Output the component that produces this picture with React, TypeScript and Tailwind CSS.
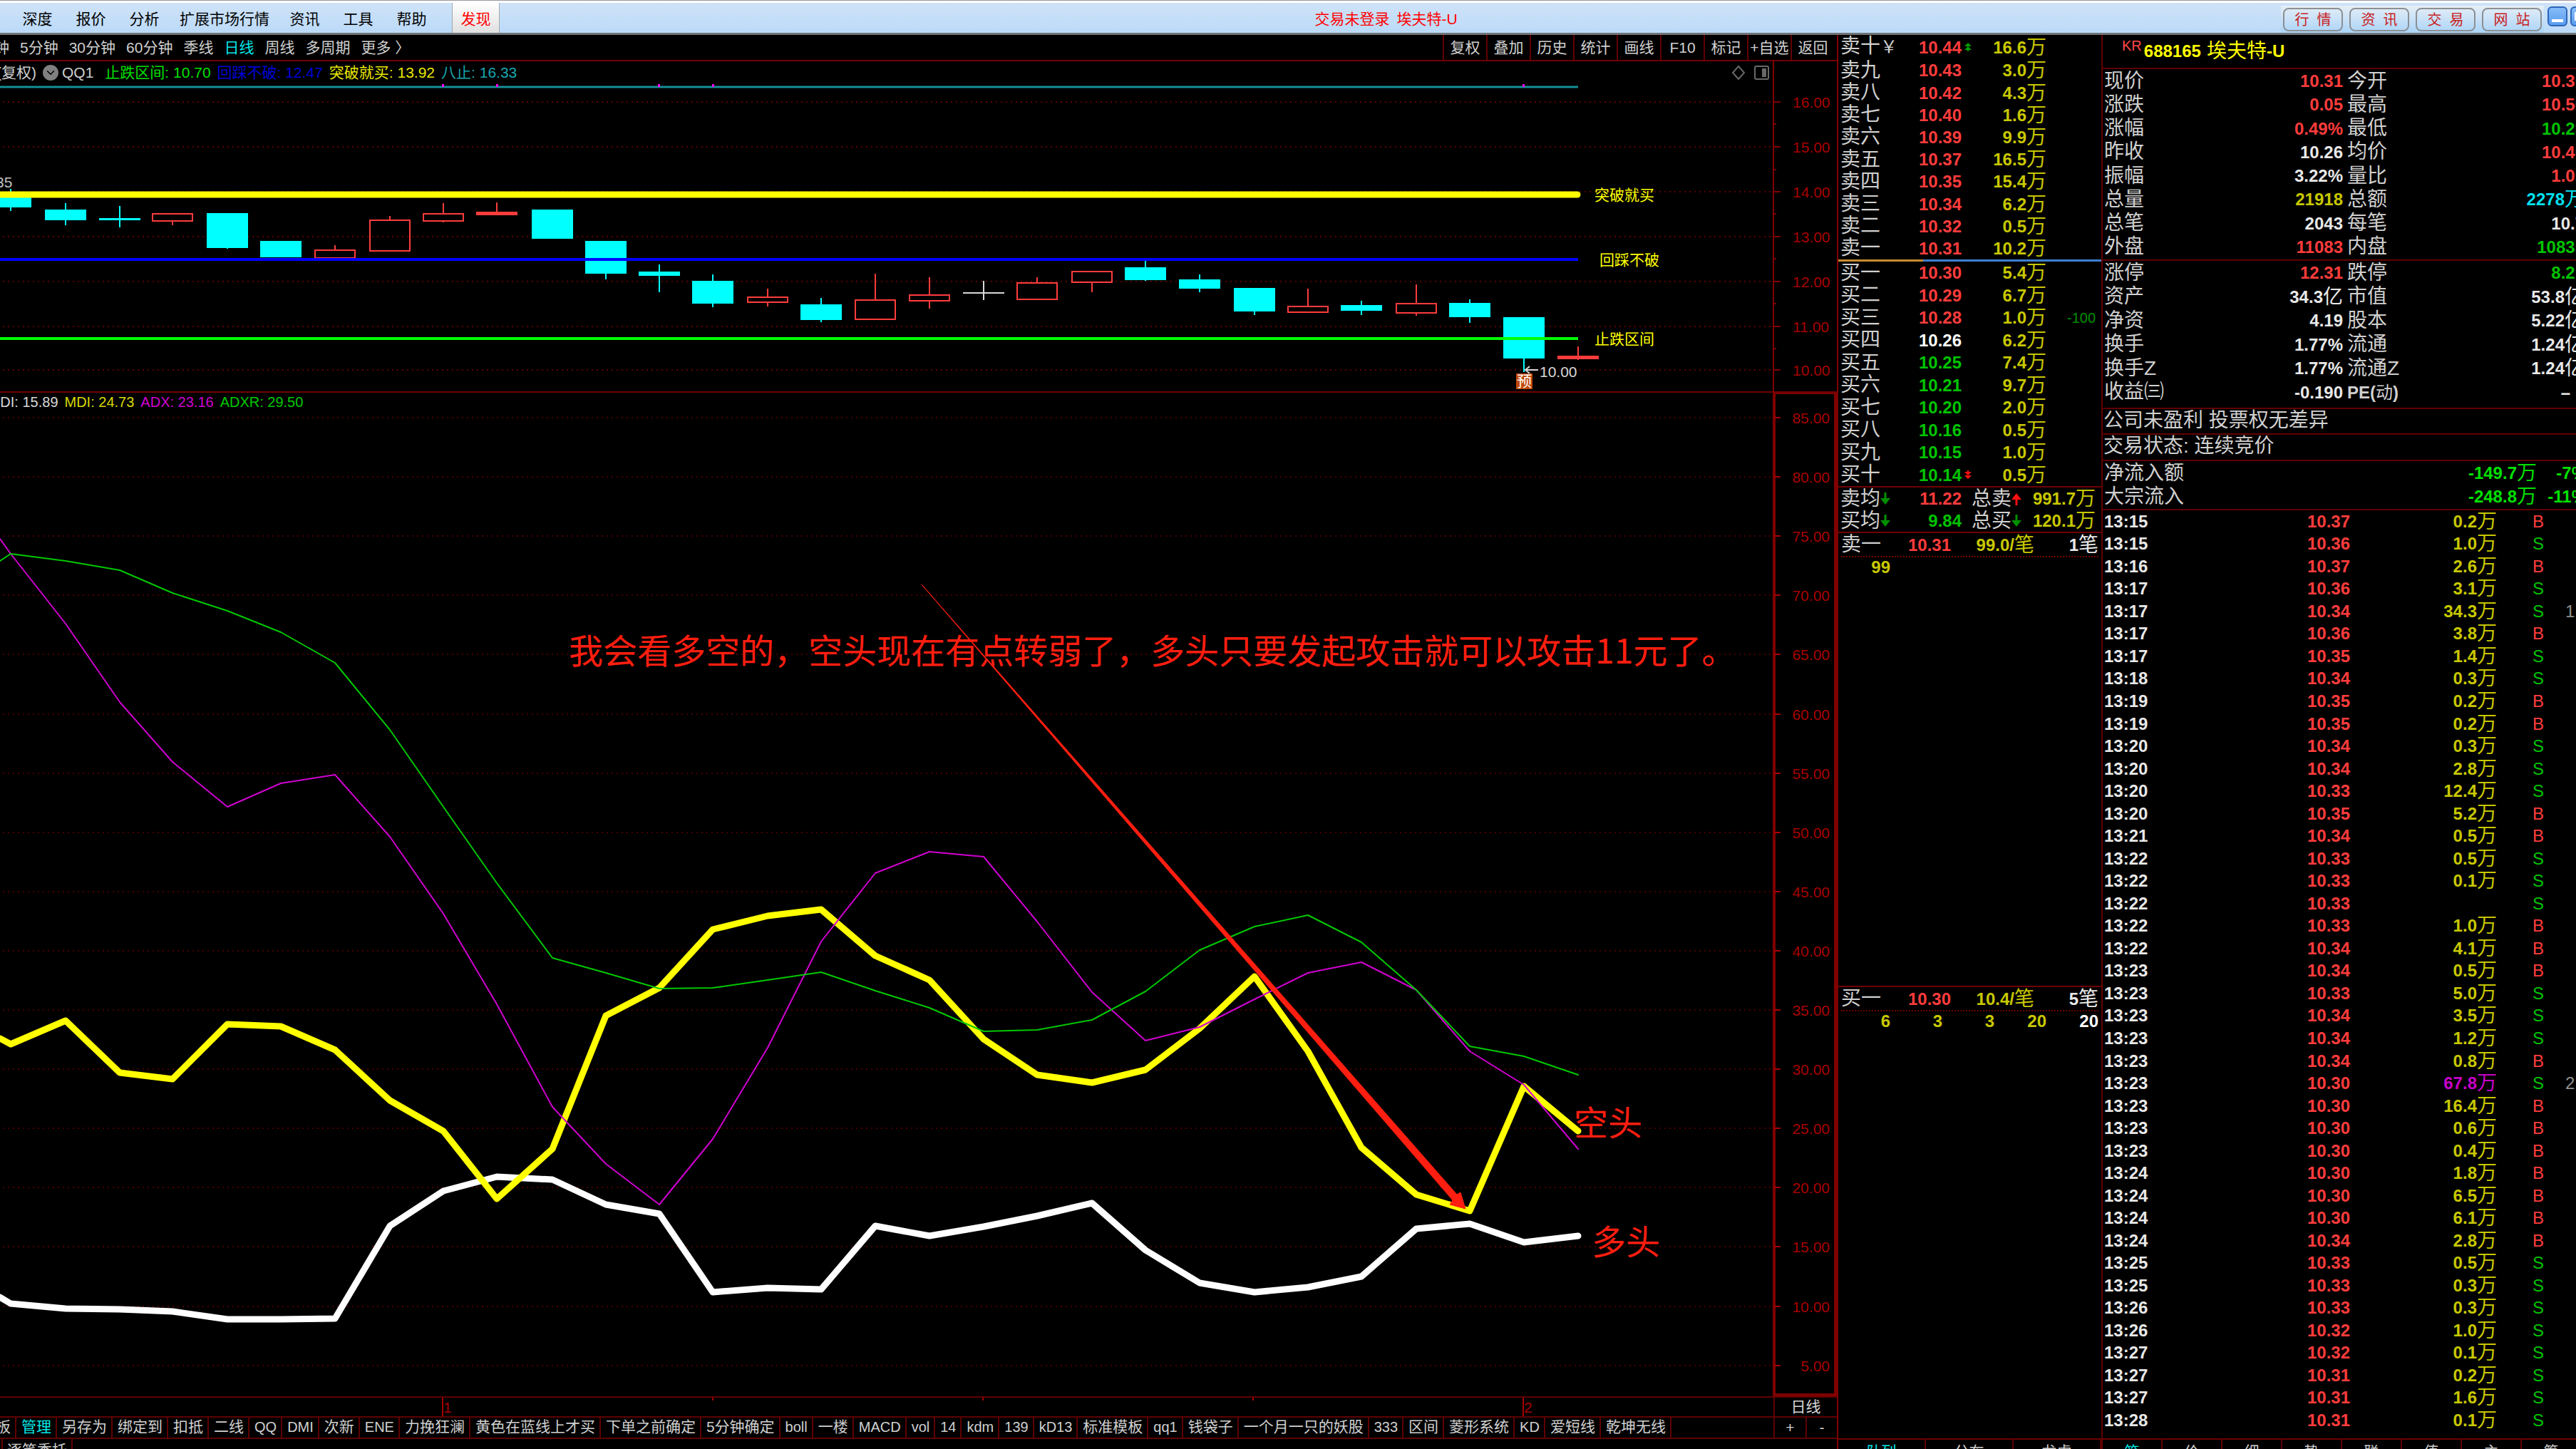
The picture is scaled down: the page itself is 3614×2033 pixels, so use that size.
import React from "react";
import { ChevronDown } from "lucide-react";

const CJK = "'Liberation Sans','Noto Sans CJK SC',sans-serif";

/* ---------- data ---------- */

const menus = ["深度", "报价", "分析", "扩展市场行情", "资讯", "工具", "帮助"];
const periods = ["钟", "5分钟", "30分钟", "60分钟", "季线", "日线", "周线", "多周期", "更多 〉"];
const tools = ["复权", "叠加", "历史", "统计", "画线", "F10", "标记", "+自选", "返回"];
const links = ["行情", "资讯", "交易", "网站"];

const X = [
  15, 92, 168, 242, 319, 394, 470, 547, 622, 697, 775, 850, 925, 1000, 1077, 1152, 1228, 1304, 1380, 1455, 1532, 1607,
  1683, 1760, 1835, 1910, 1987, 2062, 2138, 2214,
];

type Kind = "c" | "r" | "w";
// kind, body top, body bottom, wick top, wick bottom
const candles: [Kind, number, number, number, number][] = [
  ["c", 270, 291, 265, 296],
  ["c", 294, 309, 285, 316],
  ["c", 306, 309, 289, 319],
  ["r", 300, 310, 300, 316],
  ["c", 299, 348, 299, 349],
  ["c", 338, 361, 338, 361],
  ["r", 351, 362, 344, 362],
  ["r", 309, 352, 303, 352],
  ["r", 300, 310, 285, 312],
  ["r", 298, 301, 284, 301],
  ["c", 294, 335, 294, 335],
  ["c", 338, 384, 338, 392],
  ["c", 381, 387, 371, 410],
  ["c", 394, 426, 385, 431],
  ["r", 417, 424, 405, 430],
  ["c", 427, 449, 418, 452],
  ["r", 421, 448, 384, 448],
  ["r", 414, 422, 389, 433],
  ["w", 410, 412, 394, 421],
  ["r", 397, 420, 389, 420],
  ["r", 381, 396, 381, 410],
  ["c", 375, 393, 366, 394],
  ["c", 392, 405, 385, 410],
  ["c", 404, 437, 404, 442],
  ["r", 430, 438, 405, 438],
  ["c", 428, 436, 422, 442],
  ["r", 426, 439, 399, 443],
  ["c", 425, 445, 420, 453],
  ["c", 445, 503, 445, 522],
  ["r", 500, 503, 486, 505],
];

const adxr = [
  777, 787, 800, 832, 857, 887, 930, 1024, 1132, 1239, 1344, 1365, 1387, 1386, 1375, 1364, 1390, 1414, 1447, 1445, 1431,
  1391, 1333, 1300, 1284, 1322, 1389, 1468, 1482, 1508,
];
const adx = [
  777, 875, 985, 1069, 1132, 1099, 1087, 1174, 1282, 1409, 1553, 1633, 1690, 1598, 1470, 1321, 1225, 1195, 1202, 1293,
  1392, 1460, 1441, 1402, 1365, 1350, 1389, 1475, 1522, 1612,
];
const mdi = [
  1465, 1432, 1505, 1514, 1437, 1440, 1473, 1544, 1587, 1682, 1612, 1425, 1386, 1304, 1285, 1276, 1341, 1375, 1458,
  1508, 1519, 1501, 1443, 1370, 1475, 1610, 1676, 1699, 1524, 1587,
];
const pdi = [
  1829, 1836, 1837, 1840, 1851, 1851, 1850, 1720, 1671, 1651, 1655, 1690, 1703, 1813, 1807, 1809, 1720, 1734, 1721,
  1706, 1688, 1754, 1800, 1813, 1806, 1791, 1724, 1717, 1743, 1734,
];
const line = (first: number, ys: number[]) => `0,${first} ` + ys.map((y, i) => `${X[i]},${y}`).join(" ");

const priceGrid: [number, string][] = [
  [143, "16.00"], [206, "15.00"], [269, "14.00"], [332, "13.00"], [395, "12.00"], [458, "11.00"], [519, "10.00"],
];
const dmiGrid: [number, string][] = Array.from({ length: 17 }, (_, i) => [
  Math.round(586 + i * 83.1),
  (85 - i * 5).toFixed(2),
]);

const templates = [
  "板", "管理", "另存为", "绑定到", "扣抵", "二线", "QQ", "DMI", "次新", "ENE", "力挽狂澜", "黄色在蓝线上才买",
  "下单之前确定", "5分钟确定", "boll", "一楼", "MACD", "vol", "14", "kdm", "139", "kD13", "标准模板", "qq1",
  "钱袋子", "一个月一只的妖股", "333", "区间", "菱形系统", "KD", "爱短线", "乾坤无线",
];

const R = "text-[#ff3c3c]";
const G = "text-[#00c400]";
const Y = "text-[#c8c800]";
const W = "text-[#e8e8e8]";

type Level = [string, string, string, string, string?];
const asks: Level[] = [
  ["卖十", "10.44", R, "16.6万"],
  ["卖九", "10.43", R, "3.0万"],
  ["卖八", "10.42", R, "4.3万"],
  ["卖七", "10.40", R, "1.6万"],
  ["卖六", "10.39", R, "9.9万"],
  ["卖五", "10.37", R, "16.5万"],
  ["卖四", "10.35", R, "15.4万"],
  ["卖三", "10.34", R, "6.2万"],
  ["卖二", "10.32", R, "0.5万"],
  ["卖一", "10.31", R, "10.2万"],
];
const bids: Level[] = [
  ["买一", "10.30", R, "5.4万"],
  ["买二", "10.29", R, "6.7万"],
  ["买三", "10.28", R, "1.0万", "-100"],
  ["买四", "10.26", "text-white", "6.2万"],
  ["买五", "10.25", G, "7.4万"],
  ["买六", "10.21", G, "9.7万"],
  ["买七", "10.20", G, "2.0万"],
  ["买八", "10.16", G, "0.5万"],
  ["买九", "10.15", G, "1.0万"],
  ["买十", "10.14", G, "0.5万"],
];

type Pair = [string, string, string, string, string, string];
const quote: Pair[] = [
  ["现价", "10.31", R, "今开", "10.30", R],
  ["涨跌", "0.05", R, "最高", "10.56", R],
  ["涨幅", "0.49%", R, "最低", "10.23", G],
  ["昨收", "10.26", W, "均价", "10.40", R],
  ["振幅", "3.22%", W, "量比", "1.05", R],
  ["总量", "21918", Y, "总额", "2278万", "text-[#00e0f0]"],
  ["总笔", "2043", W, "每笔", "10.7", W],
  ["外盘", "11083", R, "内盘", "10835", G],
];
const basics: Pair[] = [
  ["涨停", "12.31", R, "跌停", "8.21", G],
  ["资产", "34.3亿", W, "市值", "53.8亿", W],
  ["净资", "4.19", W, "股本", "5.22亿", W],
  ["换手", "1.77%", W, "流通", "1.24亿", W],
  ["换手Z", "1.77%", W, "流通Z", "1.24亿", W],
  ["收益㈢", "-0.190", W, "PE(动)", "–\u00a0\u00a0\u00a0", W],
];

const ticks: [string, string, string, "B" | "S", string?][] = [
  ["13:15", "10.37", "0.2万", "B"],
  ["13:15", "10.36", "1.0万", "S"],
  ["13:16", "10.37", "2.6万", "B"],
  ["13:17", "10.36", "3.1万", "S"],
  ["13:17", "10.34", "34.3万", "S", "1"],
  ["13:17", "10.36", "3.8万", "B"],
  ["13:17", "10.35", "1.4万", "S"],
  ["13:18", "10.34", "0.3万", "S"],
  ["13:19", "10.35", "0.2万", "B"],
  ["13:19", "10.35", "0.2万", "B"],
  ["13:20", "10.34", "0.3万", "S"],
  ["13:20", "10.34", "2.8万", "S"],
  ["13:20", "10.33", "12.4万", "S"],
  ["13:20", "10.35", "5.2万", "B"],
  ["13:21", "10.34", "0.5万", "B"],
  ["13:22", "10.33", "0.5万", "S"],
  ["13:22", "10.33", "0.1万", "S"],
  ["13:22", "10.33", "", "S"],
  ["13:22", "10.33", "1.0万", "B"],
  ["13:22", "10.34", "4.1万", "B"],
  ["13:23", "10.34", "0.5万", "B"],
  ["13:23", "10.33", "5.0万", "S"],
  ["13:23", "10.34", "3.5万", "S"],
  ["13:23", "10.34", "1.2万", "S"],
  ["13:23", "10.34", "0.8万", "B"],
  ["13:23", "10.30", "67.8万", "S", "2"],
  ["13:23", "10.30", "16.4万", "B"],
  ["13:23", "10.30", "0.6万", "B"],
  ["13:23", "10.30", "0.4万", "B"],
  ["13:24", "10.30", "1.8万", "B"],
  ["13:24", "10.30", "6.5万", "B"],
  ["13:24", "10.30", "6.1万", "B"],
  ["13:24", "10.34", "2.8万", "B"],
  ["13:25", "10.33", "0.5万", "S"],
  ["13:25", "10.33", "0.3万", "S"],
  ["13:26", "10.33", "0.3万", "S"],
  ["13:26", "10.32", "1.0万", "S"],
  ["13:27", "10.32", "0.1万", "S"],
  ["13:27", "10.31", "0.2万", "S"],
  ["13:27", "10.31", "1.6万", "S"],
  ["13:28", "10.31", "0.1万", "S"],
];

/* ---------- small parts ---------- */

/** Bold figure with an optional larger, lighter unit such as 万 or 亿. */
function Num({ v }: { v: string }) {
  const m = v.match(/^(.*?)([万亿笔]?)$/)!;
  return (
    <span className="inline-flex items-center whitespace-nowrap text-2xl leading-7 font-bold">
      {m[1]}
      {m[2] && <span className="text-[28px] leading-7 font-normal">{m[2]}</span>}
    </span>
  );
}

function Arrow({ up, className }: { up?: boolean; className: string }) {
  return (
    <svg viewBox="0 0 14 18" className={"h-[18px] w-3.5 shrink-0 " + className} aria-hidden>
      <g transform={up ? "rotate(180 7 9)" : undefined} fill="currentColor">
        <rect x="5.5" y="0" width="3" height="11" />
        <path d="M0 8h14L7 17z" />
      </g>
    </svg>
  );
}

function DoubleArrow({ up, className }: { up?: boolean; className: string }) {
  return (
    <svg viewBox="0 0 10 12" className={"h-3 w-2.5 " + className} aria-hidden>
      <g transform={up ? undefined : "rotate(180 5 6)"} fill="currentColor">
        <path d="M5 0l5 5H0zM5 5l5 5H0zM4 9h2v3H4z" />
      </g>
    </svg>
  );
}

function Book({ rows, edge }: { rows: Level[]; edge: string }) {
  return (
    <table className="h-[315px] w-full table-fixed border-collapse text-[28px] leading-7">
      <colgroup>
        <col className="w-[90px]" />
        <col className="w-[83px]" />
        <col className="w-4" />
        <col className="w-[103px]" />
        <col />
      </colgroup>
      <tbody>
        {rows.map(([label, price, color, vol, diff]) => (
          <tr key={label}>
            <td className="p-0 pl-[3px] whitespace-nowrap">
              {label}
              {label === "卖十" && <span className="text-2xl">￥</span>}
            </td>
            <td className={"p-0 text-right " + color}>
              <Num v={price} />
            </td>
            <td className="p-0 pl-1">
              {label === edge && (
                <DoubleArrow up={edge === "卖十"} className={edge === "卖十" ? "text-[#00a000]" : "text-[#ff1010]"} />
              )}
            </td>
            <td className={"p-0 text-right " + Y}>
              <Num v={vol} />
            </td>
            <td className="p-0 pr-2 text-right text-xl leading-7 text-[#009000]">{diff}</td>
          </tr>
        ))}
      </tbody>
    </table>
  );
}

function PairTable({ rows, className }: { rows: Pair[]; className: string }) {
  return (
    <table className={"w-full table-fixed border-collapse text-[28px] leading-7 " + className}>
      <colgroup>
        <col className="w-[110px]" />
        <col className="w-[227px]" />
        <col className="w-[110px]" />
        <col />
      </colgroup>
      <tbody>
        {rows.map(([a, b, bc, c, d, dc]) => (
          <tr key={a}>
            <th scope="row" className="p-0 pl-[2px] text-left font-normal whitespace-nowrap">{a}</th>
            <td className={"p-0 text-right " + bc}>
              <Num v={b} />
            </td>
            <th scope="row" className="p-0 pl-[6px] text-left font-normal whitespace-nowrap">
              {c === "PE(动)" ? (
                <span className="text-2xl leading-7 font-bold">
                  PE(<span className="font-normal">动</span>)
                </span>
              ) : (
                c
              )}
            </th>
            <td className={"p-0 pr-[3px] text-right " + dc}>
              <Num v={d} />
            </td>
          </tr>
        ))}
      </tbody>
    </table>
  );
}

function Queue({ head, cells }: { head: [string, string, string, string]; cells: string[] }) {
  return (
    <section>
      <div className="mx-1 flex h-[34px] items-center border-b-2 border-dotted border-[#700000] text-[28px] leading-7">
        <span className="w-14">{head[0]}</span>
        <span className={"w-[98px] text-right " + R}>
          <Num v={head[1]} />
        </span>
        <span className={"w-[117px] text-right " + Y}>
          <Num v={head[2]} />
        </span>
        <span className={"flex-1 text-right " + W}>
          <Num v={head[3]} />
        </span>
      </div>
      <div className="grid grid-cols-5 pr-1 text-right">
        {cells.map((c, i) => (
          <span key={i} className={i === 4 ? "text-white" : Y}>
            <Num v={c} />
          </span>
        ))}
      </div>
    </section>
  );
}

/* ---------- charts ---------- */

function PriceChart() {
  return (
    <svg viewBox="0 86 2577 463" className="block h-auto w-full" fontFamily={CJK} fontSize="21">
      <g stroke="#5c0000" strokeWidth="2" strokeDasharray="2 5">
        {priceGrid.map(([y]) => (
          <line key={y} x1="4" x2="2486" y1={y} y2={y} />
        ))}
      </g>
      <g stroke="#800000" strokeWidth="2">
        <line x1="2488" x2="2488" y1="86" y2="549" />
        {priceGrid.map(([y]) => (
          <line key={y} x1="2488" x2="2498" y1={y} y2={y} />
        ))}
        {[174, 238, 300, 363, 426, 489].map((y) => (
          <line key={y} x1="2488" x2="2492" y1={y} y2={y} />
        ))}
      </g>
      <g fill="#a80000">
        {priceGrid.map(([y, t]) => (
          <text key={y} x="2515" y={y + 8}>{t}</text>
        ))}
      </g>
      <line x1="0" x2="2214" y1="122" y2="122" stroke="#149098" strokeWidth="3" />
      <g fill="#ff00ff">
        {[620, 696, 923, 999, 2136].map((x) => (
          <rect key={x} x={x} y="118" width="3" height="4" />
        ))}
      </g>
      {candles.map(([k, t, b, wt, wb], i) => {
        const x = X[i];
        if (k === "r") {
          return (
            <g key={x} stroke="#ff3c3c" strokeWidth="2" fill="none">
              {wt < t && <line x1={x} x2={x} y1={wt} y2={t} />}
              {wb > b && <line x1={x} x2={x} y1={b} y2={wb} />}
              <rect x={x - 28} y={t} width="56" height={b - t} fill={b - t < 5 ? "#ff3c3c" : "none"} />
            </g>
          );
        }
        const c = k === "c" ? "#00ffff" : "#d8d8d8";
        return (
          <g key={x} fill={c}>
            <rect x={x - 1} y={wt} width="2" height={wb - wt} />
            <rect x={x - 29} y={t} width="58" height={b - t} />
          </g>
        );
      })}
      <line x1="0" x2="2213" y1="273" y2="273" stroke="#ffff00" strokeWidth="9" strokeLinecap="round" />
      <line x1="0" x2="2214" y1="364" y2="364" stroke="#0000ff" strokeWidth="4" />
      <line x1="0" x2="2214" y1="475" y2="475" stroke="#00ff00" strokeWidth="4" />
      <g fill="#ffff00">
        <text x="2237" y="281">突破就买</text>
        <text x="2244" y="372">回踩不破</text>
        <text x="2237" y="483">止跌区间</text>
      </g>
      <text x="-6" y="263" fill="#c0c0c0">35</text>
      <path d="M2158 519h-18m6-5l-6 5 6 5" stroke="#d8d8d8" strokeWidth="2" fill="none" />
      <text x="2160" y="529" fill="#d8d8d8">10.00</text>
      <rect x="2127" y="524" width="23" height="22" fill="#c04808" />
      <text x="2128" y="542" fill="#ffffff">预</text>
    </svg>
  );
}

function DmiChart() {
  return (
    <svg viewBox="0 551 2577 1408" className="block h-auto w-full" fontFamily={CJK} fontSize="21">
      <g stroke="#480000" strokeWidth="2" strokeDasharray="2 5">
        {dmiGrid.map(([y]) => (
          <line key={y} x1="4" x2="2486" y1={y} y2={y} />
        ))}
      </g>
      <rect x="2489" y="551" width="86" height="1406" fill="none" stroke="#800000" strokeWidth="4" />
      <g fill="#a80000">
        {dmiGrid.map(([y, t]) => (
          <React.Fragment key={y}>
            <rect x="2489" y={y - 1} width="9" height="2" />
            <text x="2567" y={y + 8} textAnchor="end">{t}</text>
          </React.Fragment>
        ))}
      </g>
      <g fill="none" strokeLinecap="round" strokeLinejoin="round">
        <polyline points={line(1820, pdi)} stroke="#ffffff" strokeWidth="9" />
        <polyline points={line(1457, mdi)} stroke="#ffff00" strokeWidth="9" />
        <polyline points={line(756, adx)} stroke="#d000d0" strokeWidth="2" />
        <polyline points={line(787, adxr)} stroke="#00c800" strokeWidth="2" />
      </g>
      <path d="M1293 820L2044 1676 2049 1673 2056 1696 2034 1690 2038 1684z" fill="#ff1e10" stroke="#ff1e10" />
      <g fill="#ff1e10" fontSize="48" fontFamily="'Noto Sans CJK SC',sans-serif">
        <text x="798" y="931">我会看多空的，空头现在有点转弱了，多头只要发起攻击就可以攻击11元了。</text>
        <text x="2208" y="1593">空头</text>
        <text x="2233" y="1760">多头</text>
      </g>
    </svg>
  );
}

/* ---------- page ---------- */

function TitleBar() {
  return (
    <header className="flex h-[49px] shrink-0 border-t border-b-[3px] border-t-[#97979f] border-b-[#707478] bg-white pt-[3px] text-[21px]">
      <div className="flex flex-1 overflow-hidden bg-linear-to-b from-[#cfe3f8] to-[#bbdaf8]">
        <nav className="flex shrink-0 pl-[15px] text-black">
          {menus.map((m) => (
            <button key={m} type="button" className={"pt-1 " + (m.length > 2 ? "w-[150px]" : "w-[75px]")}>
              {m}
            </button>
          ))}
          <button
            type="button"
            className="ml-[19px] w-[67px] border-x border-[#a0a8b0] bg-linear-to-b from-white to-[#e0e0e0] pt-1 text-[#ff0000]"
          >
            发现
          </button>
        </nav>
        <h1 className="flex flex-1 items-center justify-center gap-[10px] pt-1 pr-3 text-[#ff0000]">
          <span>交易未登录</span>
          <span>埃夫特-U</span>
        </h1>
        <div className="flex w-[414px] shrink-0 overflow-hidden">
          <div className="mt-1 flex shrink-0 items-start gap-[9px] bg-linear-to-b from-[#e6eef6] to-[#aad4f8] px-[3px] pt-[3px]">
            {links.map((l) => (
              <a
                key={l}
                href="#"
                className="flex h-[33px] w-21 items-center justify-center gap-[11px] rounded-lg border-2 border-[#8c9094] text-xl text-[#c82020]"
              >
                <span>{l[0]}</span>
                <span>{l[1]}</span>
              </a>
            ))}
          </div>
          <button
            type="button"
            aria-label="最小化"
            className="mt-[5px] ml-[5px] flex h-7 w-7 shrink-0 items-end justify-center rounded-md border-2 border-[#2c66b8] bg-linear-to-b from-[#86bcf8] to-[#5a9cf0] pb-1"
          >
            <span className="h-1 w-4 bg-white" />
          </button>
          <button
            type="button"
            aria-label="最大化"
            className="mt-[5px] ml-1 flex h-7 w-7 shrink-0 items-center justify-center rounded-md border-2 border-[#2c66b8] bg-linear-to-b from-[#86bcf8] to-[#5a9cf0]"
          >
            <span className="h-3 w-4 border-2 border-white" />
          </button>
        </div>
      </div>
    </header>
  );
}

function ChartColumn() {
  return (
    <main className="flex min-w-0 flex-1 flex-col text-[21px] text-[#d0d0d0]">
      <div className="flex h-[37px] shrink-0 border-b-2 border-[#700000]">
        <div className="-ml-2 flex flex-1 items-center gap-[15px] overflow-hidden whitespace-nowrap">
          {periods.map((p) => (
            <button key={p} type="button" className={p === "日线" ? "text-[#00e8e8]" : ""}>
              {p}
            </button>
          ))}
        </div>
        {tools.map((t) => (
          <button key={t} type="button" className="w-[61px] border-l-2 border-[#600000] whitespace-nowrap">
            {t}
          </button>
        ))}
        <span className="w-1" />
      </div>

      <section className="relative shrink-0 border-b-2 border-[#700000]">
        <PriceChart />
        <div className="absolute inset-x-0 top-0 -ml-[5px] flex h-8 items-center whitespace-nowrap">
          <span>(复权)</span>
          <ChevronDown className="mr-[5px] ml-[9px] h-[22px] w-[22px] rounded-full bg-[#808080] p-0.5 text-black" />
          <span className="mr-4">QQ1</span>
          <span className="mr-[9px] text-[#00e000]">止跌区间: 10.70</span>
          <span className="mr-[9px] text-[#0000d8]">回踩不破: 12.47</span>
          <span className="mr-[9px] text-[#e8e800]">突破就买: 13.92</span>
          <span className="text-[#18a8b0]">八止: 16.33</span>
          <svg viewBox="0 0 54 22" className="mr-[94px] ml-auto h-[22px] w-[54px]" fill="none" stroke="#686868" strokeWidth="2">
            <path d="M10 2l8 9-8 9-8-9z" />
            <rect x="33" y="2" width="19" height="18" rx="2" />
            <rect x="44" y="6" width="4" height="10" fill="#686868" />
          </svg>
        </div>
      </section>

      <section className="relative shrink-0 border-b-2 border-[#600000]">
        <DmiChart />
        <div className="absolute top-0 left-0 -ml-[13px] flex h-[26px] items-center gap-[9px] text-xl whitespace-nowrap">
          <span className="text-[#d8d8d8]">PDI: 15.89</span>
          <span className="text-[#d8d800]">MDI: 24.73</span>
          <span className="text-[#d000d0]">ADX: 23.16</span>
          <span className="text-[#00c800]">ADXR: 29.50</span>
        </div>
      </section>

      <div className="flex h-7 shrink-0 border-b-2 border-[#600000]">
        <svg viewBox="0 1961 2488 26" className="block h-[26px] min-w-0 flex-1" fontFamily={CJK} fontSize="21" fill="#a80000">
          <rect x="620" y="1961" width="2" height="26" />
          <rect x="999" y="1961" width="2" height="4" />
          <rect x="1378" y="1961" width="2" height="4" />
          <rect x="1757" y="1961" width="2" height="4" />
          <rect x="2136" y="1961" width="2" height="26" />
          <text x="622" y="1982">1</text>
          <text x="2138" y="1982">2</text>
        </svg>
        <div className="flex w-[89px] items-center justify-center border-l-2 border-[#600000] text-[#d8d8d8]">日线</div>
      </div>

      <div className="flex h-[30px] shrink-0 border-b-2 border-[#600000] leading-[26px]">
        <div className="-ml-[13px] flex min-w-0 flex-1 overflow-hidden">
          {templates.map((t) => (
            <button
              key={t}
              type="button"
              className={
                "flex shrink-0 border-r-2 border-[#600000] pr-1.5 pl-[7px] whitespace-nowrap " +
                (/^[A-Za-z0-9]+$/.test(t) ? "text-xl leading-[26px] " : "") +
                (t === "管理" ? "text-[#00e8e8]" : "")
              }
            >
              {t}
            </button>
          ))}
        </div>
        <button type="button" className="w-[45px] border-l-2 border-[#600000]">+</button>
        <button type="button" className="w-11 border-l-2 border-[#600000]">-</button>
      </div>
      <div className="flex shrink-0 pl-[2px]">
        <button type="button" className="border-x-2 border-[#600000] px-[6px] whitespace-nowrap">逐笔委托</button>
      </div>
    </main>
  );
}

function BottomTabs({ items, cell }: { items: string[]; cell: string }) {
  return (
    <div className="flex h-[15px] shrink-0 overflow-hidden border-t-2 border-[#700000] text-[21px] leading-[29px]">
      {items.map((t, i) => (
        <button
          key={t}
          type="button"
          className={"h-8 shrink-0 border-r-2 border-[#600000] " + cell + (i === 0 ? " text-[#00e8e8]" : "")}
        >
          {t}
        </button>
      ))}
    </div>
  );
}

function DepthColumn() {
  return (
    <aside className="flex w-[371px] shrink-0 flex-col border-l-2 border-[#800000] text-[#d0d0d0]">
      <div>
        <Book rows={asks} edge="卖十" />
      </div>
      <div className="flex h-[3px] shrink-0">
        <span className="w-[119px] bg-[#c88c30]" />
        <span className="flex-1 bg-[#3c80d0]" />
      </div>
      <Book rows={bids} edge="买十" />
      <div className="border-y-2 border-[#700000]">
        {(
          [
            ["卖均", "11.22", R, "总卖", true, "991.7万"],
            ["买均", "9.84", G, "总买", false, "120.1万"],
          ] as [string, string, string, string, boolean, string][]
        ).map(([a, p, c, b, up, v]) => (
          <div key={a} className="flex h-[31px] items-center pr-2 pl-[3px] text-[28px] leading-7">
            <span>{a}</span>
            <Arrow className="text-[#009000]" />
            <span className={"w-[100px] text-right " + c}>
              <Num v={p} />
            </span>
            <span className="ml-3.5">{b}</span>
            <Arrow up={up} className={up ? "text-[#ff1010]" : "text-[#009000]"} />
            <span className={"flex-1 text-right " + Y}>
              <Num v={v} />
            </span>
          </div>
        ))}
      </div>
      <div className="h-[635px] shrink-0">
        <Queue head={["卖一", "10.31", "99.0/笔", "1笔"]} cells={["99"]} />
      </div>
      <div className="flex-1 border-t-2 border-[#700000]">
        <Queue head={["买一", "10.30", "10.4/笔", "5笔"]} cells={["6", "3", "3", "20", "20"]} />
      </div>
      <BottomTabs items={["队列", "分布", "龙虎"]} cell="w-[123px]" />
    </aside>
  );
}

function QuoteColumn() {
  return (
    <aside className="w-[666px] shrink-0 overflow-hidden border-l-2 border-[#600000] text-[#d0d0d0]">
      <div className="flex h-full w-[679px] flex-col">
        <h2 className="flex h-12 shrink-0 items-center border-b-2 border-[#600000] pl-[27px] text-2xl text-[#ffff00]">
          <span className="mr-[3px] mb-4 text-xl leading-5 text-[#ff4848]">KR</span>
          <span className="font-bold">688165</span>
          <span className="ml-2 flex items-center text-[28px] leading-7 font-normal">
            埃夫特<b className="text-2xl">-U</b>
          </span>
        </h2>
        <PairTable rows={quote} className="h-[266px]" />
        <div className="mt-px h-0.5 shrink-0 bg-[#600000]" />
        <PairTable rows={basics} className="mb-[5px] h-[201px]" />
        <p className="h-9 border-t-2 border-[#600000] pl-px text-[28px] leading-[32px]">公司未盈利 投票权无差异</p>
        <p className="h-[37px] border-t-2 border-[#600000] pl-px text-[28px] leading-[32px]">交易状态: 连续竞价</p>
        <div className="h-[71px] border-y-2 border-[#600000]">
          <table className="h-[66px] w-full table-fixed border-collapse text-[28px] leading-7">
            <tbody>
              {[
                ["净流入额", "-149.7万", "-7%"],
                ["大宗流入", "-248.8万", "-11%"],
              ].map(([a, b, c]) => (
                <tr key={a} className="text-[#00e000]">
                  <th scope="row" className="p-0 pl-[2px] text-left font-normal text-[#d0d0d0]">{a}</th>
                  <td className="p-0 text-right">
                    <Num v={b} />
                  </td>
                  <td className="w-[70px] p-0 text-right">
                    <Num v={c} />
                  </td>
                </tr>
              ))}
            </tbody>
          </table>
        </div>
        <table className="h-[1293px] w-full table-fixed border-collapse text-2xl leading-7">
          <colgroup>
            <col className="w-[110px]" />
            <col className="w-[237px]" />
            <col className="w-[206px]" />
            <col className="w-[76px]" />
            <col />
          </colgroup>
          <tbody>
            {ticks.map(([t, p, v, side, n], i) => (
              <tr key={i}>
                <td className={"p-0 pl-[2px] " + W}>
                  <Num v={t} />
                </td>
                <td className={"p-0 text-right " + R}>
                  <Num v={p} />
                </td>
                <td className={"p-0 text-right " + (n === "2" ? "text-[#c800c8]" : Y)}>
                  <Num v={v} />
                </td>
                <td className={"p-0 pl-[50px] " + (side === "B" ? R : G)}>{side}</td>
                <td className="p-0 pl-5 text-[#909090]">{n}</td>
              </tr>
            ))}
          </tbody>
        </table>
        <div className="flex-1" />
        <BottomTabs items={["笔", "价", "细", "势", "联", "值", "主", "筹"]} cell="w-21" />
      </div>
    </aside>
  );
}

export default function App() {
  return (
    <div className="flex h-screen flex-col overflow-hidden bg-black font-['Liberation_Sans','Noto_Sans_CJK_SC',sans-serif]">
      <TitleBar />
      <div className="flex min-h-0 flex-1">
        <ChartColumn />
        <DepthColumn />
        <QuoteColumn />
      </div>
    </div>
  );
}
